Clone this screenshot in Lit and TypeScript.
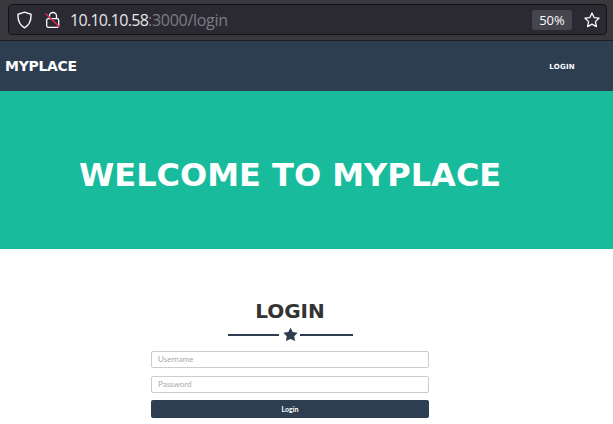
import { LitElement, html, css } from "lit";
import { customElement } from "lit/decorators.js";

@customElement("app-root")
export class AppRoot extends LitElement {
  static styles = css`
    :host { display: block; width: 613px; height: 424px; overflow: hidden; background: #fff; font-family: "Lato", sans-serif; }
    .chrome { height: 41px; box-sizing: border-box; background: #38383d; padding: 4px 6px 5px 8px; border-bottom: 1px solid #202024; display: flex; }
    .urlbar { flex: 1; box-sizing: border-box; border: 1px solid #141418; border-radius: 4px; background: #2b2a33; display: flex; align-items: center; padding: 0 6px 0 8px; color: #fbfbfe; }
    .shield { width: 15px; height: 18px; margin-right: 13px; }
    .lock { width: 16px; height: 18px; margin-right: 9px; }
    .url { font-family: "Open Sans", sans-serif; font-size: 16px; flex: 1; color: #e6e6ea; letter-spacing: -0.7px; }
    .url span { color: #7c7c82; letter-spacing: -0.3px; }
    .zoom { width: 40px; height: 20px; margin-right: 12px; border-radius: 3px; background: #45454e; font-family: "Open Sans", sans-serif; font-size: 13px; display: flex; align-items: center; justify-content: center; }
    .star { width: 16px; height: 16px; }
    nav { height: 50px; box-sizing: border-box; background: #2c3e50; display: flex; align-items: center; justify-content: space-between; padding: 0 38px 0 5px; color: #fff; font-family: "DejaVu Sans", sans-serif; font-weight: 700; }
    .brand { font-size: 14px; letter-spacing: -0.3px; }
    .link { font-size: 7px; letter-spacing: 0.3px; padding-top: 1px; }
    .hero { height: 158px; background: #18bc9c; display: flex; align-items: center; box-sizing: border-box; padding: 9px 0 0 79px; color: #fff; }
    h1 { margin: 0; font-family: "DejaVu Sans", sans-serif; font-size: 32px; font-weight: 700; white-space: nowrap; }
    main { display: flex; flex-direction: column; align-items: center; padding-top: 49px; width: 580px; }
    h2 { margin: 0; height: 26px; line-height: 26px; color: #333; font-family: "DejaVu Sans", sans-serif; font-size: 20px; font-weight: 700; }
    .divider { display: flex; align-items: center; margin-top: 3px; height: 15px; }
    .line { width: 51px; height: 2px; background: #2c3e50; }
    .line.r { width: 53px; }
    .divider svg { width: 15px; height: 15px; display: block; margin: 0 2px 0 4px; }
    form { width: 278px; margin-top: 9px; display: flex; flex-direction: column; }
    .input { height: 17px; box-sizing: border-box; border: 1px solid #ccc; border-radius: 2px; padding: 0 6px; font-size: 8px; line-height: 15px; color: #aaa; margin-bottom: 8px; }
    .input.last { margin-bottom: 7px; }
    .btn { height: 18px; background: #2c3e50; border-radius: 2px; color: #fff; font-size: 7px; font-weight: 700; display: flex; align-items: center; justify-content: center; }
  `;
  render() {
    return html`
      <div class="chrome">
        <div class="urlbar">
          <svg class="shield" viewBox="0 0 15 18" fill="none" stroke="#fbfbfe" stroke-width="1.4"><path d="M7.5 1.2 L14 3.3 C14.3 9.5 12.5 14 7.5 16.8 C2.5 14 .7 9.5 1 3.3 Z"/></svg>
          <svg class="lock" viewBox="0 0 16 18" fill="none"><path d="M4.5 7.5V5a3.5 3.5 0 0 1 7 0v2.5" stroke="#fbfbfe" stroke-width="1.3"/><rect x="1.7" y="7.7" width="12" height="8.6" rx="1.5" stroke="#fbfbfe" stroke-width="1.3"/><path d="M0.5 2.5 L14.5 16" stroke="#e22850" stroke-width="1.5"/></svg>
          <div class="url">10.10.10.58<span>:3000/login</span></div>
          <div class="zoom">50%</div>
          <svg class="star" viewBox="0 0 16 16" fill="none" stroke="#fbfbfe" stroke-width="1.3" stroke-linejoin="round"><path d="M8 1 L10.1 5.6 L15 6.2 L11.4 9.6 L12.4 14.6 L8 12.1 L3.6 14.6 L4.6 9.6 L1 6.2 L5.9 5.6 Z"/></svg>
        </div>
      </div>
      <nav><div class="brand">MYPLACE</div><div class="link">LOGIN</div></nav>
      <section class="hero"><h1>WELCOME TO MYPLACE</h1></section>
      <main>
        <h2>LOGIN</h2>
        <div class="divider">
          <div class="line"></div>
          <svg viewBox="0 0 16 16" fill="#2c3e50"><path d="M8 .8 L10.4 5.3 L15.6 6.1 L12 9.8 L12.9 15 L8 12.7 L3.1 15 L4 9.8 L.4 6.1 L5.6 5.3 Z"/></svg>
          <div class="line r"></div>
        </div>
        <form>
          <div class="input">Username</div>
          <div class="input last">Password</div>
          <div class="btn">Login</div>
        </form>
      </main>
    `;
  }
}
